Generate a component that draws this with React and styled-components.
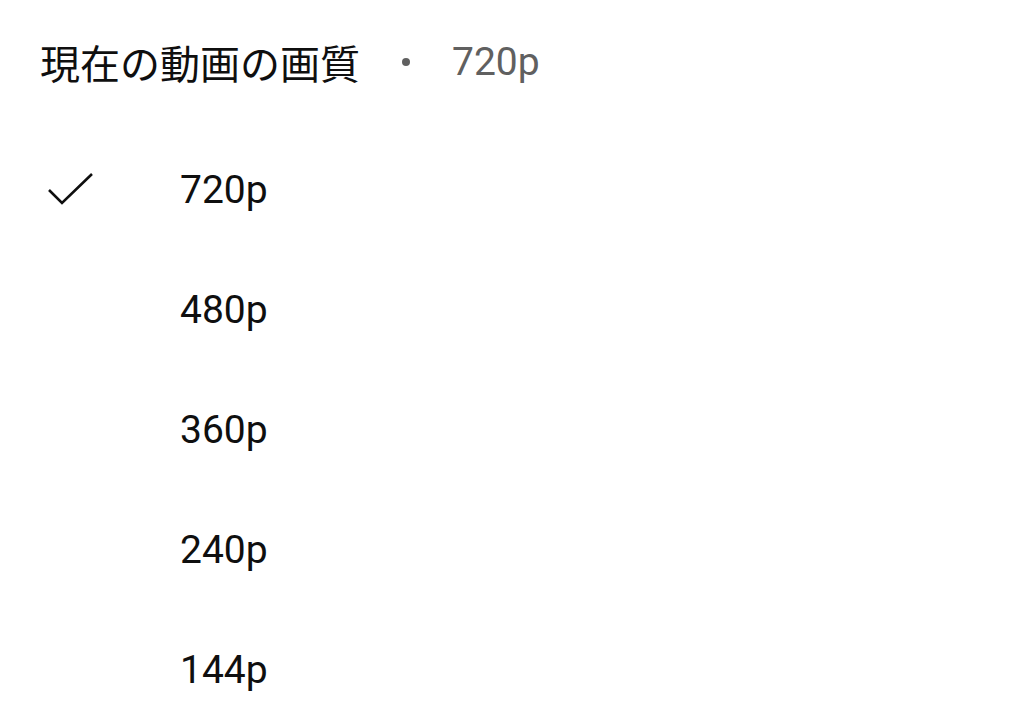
import React from "react";
import styled, { createGlobalStyle } from "styled-components";

const Global = createGlobalStyle`
  html, body { margin: 0; padding: 0; background: #ffffff; }
  body { font-family: Roboto, "Noto Sans CJK JP", sans-serif; }
`;

const Sheet = styled.div`
  width: 1024px;
  height: 716px;
  background: #ffffff;
  overflow: hidden;
  display: flex;
  flex-direction: column;
`;

const Header = styled.div`
  flex-shrink: 0;
  height: 124px;
  display: flex;
  align-items: center;
  padding-left: 40px;
  box-sizing: border-box;
`;

const Title = styled.span`
  font-family: "Noto Sans CJK JP", sans-serif;
  font-size: 40px;
  color: #0f0f0f;
  line-height: 1;
`;

const Dot = styled.span`
  width: 8px;
  height: 8px;
  border-radius: 50%;
  background: #606060;
  margin-left: 42px;
`;

const Current = styled.span`
  font-family: Roboto, sans-serif;
  font-size: 39px;
  color: #606060;
  margin-left: 42px;
  line-height: 1;
`;

const List = styled.div`
  flex-shrink: 0;
  display: flex;
  flex-direction: column;
  padding-top: 6px;
`;

const Row = styled.div`
  flex-shrink: 0;
  height: 120px;
  display: flex;
  align-items: center;
`;

const CheckCell = styled.div`
  width: 180px;
  display: flex;
  align-items: center;
  padding-left: 46px;
  box-sizing: border-box;
  color: #0f0f0f;
`;

const Label = styled.span`
  font-family: Roboto, sans-serif;
  font-size: 39px;
  color: #0f0f0f;
  line-height: 1;
`;

const Check = () => (
  <svg width="48" height="34" viewBox="0 0 48 34" fill="none">
    <path d="M3 17 L16 30 L46 1" stroke="#0f0f0f" strokeWidth="2.6" strokeLinecap="butt" strokeLinejoin="miter" />
  </svg>
);

const options = ["720p", "480p", "360p", "240p", "144p"];

export default function App() {
  return (
    <>
      <Global />
      <Sheet>
        <Header>
          <Title>現在の動画の画質</Title>
          <Dot />
          <Current>720p</Current>
        </Header>
        <List>
          {options.map((o, i) => (
            <Row key={o}>
              <CheckCell>{i === 0 && <Check />}</CheckCell>
              <Label>{o}</Label>
            </Row>
          ))}
        </List>
      </Sheet>
    </>
  );
}
